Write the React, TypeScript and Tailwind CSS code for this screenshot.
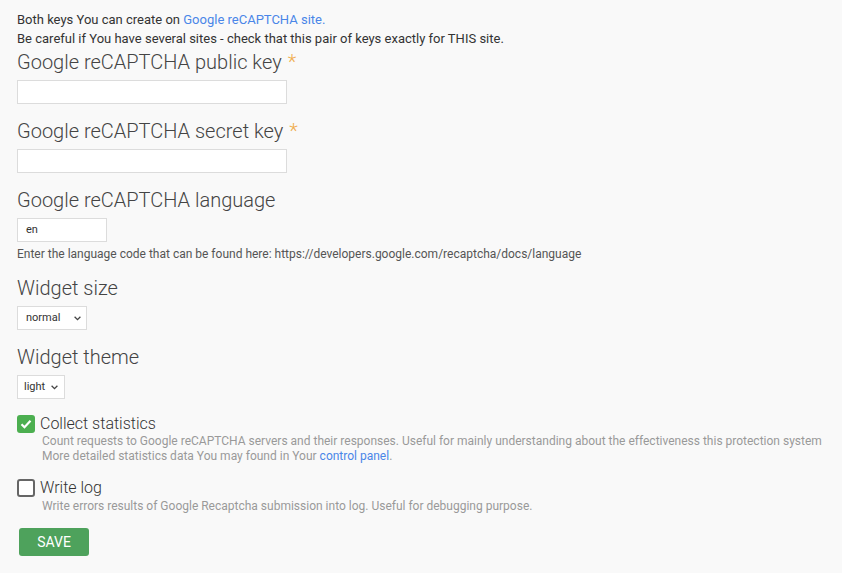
import React from "react";

function Chevron() {
  return (
    <svg width="7" height="5" viewBox="0 0 7 5" fill="none" className="shrink-0">
      <path d="M0.6 0.8l2.9 2.9L6.4 0.8" stroke="#444" strokeWidth="1.3" />
    </svg>
  );
}

function Heading({ children, required }: { children: React.ReactNode; required?: boolean }) {
  return (
    <div className="text-[20px] leading-[28px] font-light text-[#444]">
      {children}
      {required && <span className="text-[#f0ad4e] ml-[6px]">*</span>}
    </div>
  );
}

export default function App() {
  return (
    <div
      className="min-h-[573px] bg-[#f9f9f9] pl-[17px] pt-[10px] text-[#333]"
      style={{ fontFamily: "Roboto, 'Liberation Sans', sans-serif" }}
    >
      <div className="text-[13px] leading-[19px]">
        Both keys You can create on{" "}
        <a className="text-[#4a86e8]">Google reCAPTCHA site.</a>
      </div>
      <div className="text-[13px] leading-[19px]">
        Be careful if You have several sites - check that this pair of keys exactly for THIS site.
      </div>

      <Heading required>Google reCAPTCHA public key</Heading>
      <div className="mt-[4px] w-[270px] h-[24px] bg-white border border-[#dcdcdc]" />

      <div className="mt-[13px]">
        <Heading required>Google reCAPTCHA secret key</Heading>
      </div>
      <div className="mt-[4px] w-[270px] h-[24px] bg-white border border-[#dcdcdc]" />

      <div className="mt-[13px]">
        <Heading>Google reCAPTCHA language</Heading>
      </div>
      <div className="mt-[4px] w-[90px] h-[24px] bg-white border border-[#dcdcdc] flex items-center pl-[8px] text-[11px] text-[#333]">
        en
      </div>
      <div className="mt-[4px] text-[12px] leading-[16px] text-[#555]">
        Enter the language code that can be found here: https://developers.google.com/recaptcha/docs/language
      </div>

      <div className="mt-[12px]">
        <Heading>Widget size</Heading>
      </div>
      <div className="mt-[4px] w-[70px] h-[24px] bg-white border border-[#dcdcdc] flex items-center justify-between pl-[8px] pr-[5px] text-[11px] text-[#333]">
        <span>normal</span>
        <Chevron />
      </div>

      <div className="mt-[13px]">
        <Heading>Widget theme</Heading>
      </div>
      <div className="mt-[4px] w-[48px] h-[24px] bg-white border border-[#dcdcdc] flex items-center gap-[6px] pl-[6px] text-[11px] text-[#333]">
        <span>light</span>
        <Chevron />
      </div>

      <div className="mt-[15px] flex items-center gap-[5px] h-[20px]">
        <div className="w-[18px] h-[18px] rounded-[3px] bg-[#4caf50] flex items-center justify-center">
          <svg width="12" height="10" viewBox="0 0 12 10" fill="none">
            <path d="M1.5 5.2l3 3L10.5 1.8" stroke="white" strokeWidth="2.2" />
          </svg>
        </div>
        <span className="text-[16px] font-light text-[#333]">Collect statistics</span>
      </div>
      <div className="pl-[25px] text-[12px] leading-[15px] text-[#999]">
        <div>
          Count requests to Google reCAPTCHA servers and their responses. Useful for mainly understanding about the effectiveness this protection system
        </div>
        <div>
          More detailed statistics data You may found in Your{" "}
          <a className="text-[#4a86e8]">control panel</a>.
        </div>
      </div>

      <div className="mt-[14px] flex items-center gap-[5px] h-[20px]">
        <div className="w-[18px] h-[18px] rounded-[3px] bg-white border-2 border-[#666]" />
        <span className="text-[16px] font-light text-[#333]">Write log</span>
      </div>
      <div className="pl-[25px] text-[12px] leading-[16px] text-[#999]">
        Write errors results of Google Recaptcha submission into log. Useful for debugging purpose.
      </div>

      <button className="mt-[14px] ml-[2px] w-[70px] h-[28px] rounded-[3px] bg-[#4ea25c] text-white text-[14px] uppercase">
        Save
      </button>
    </div>
  );
}
